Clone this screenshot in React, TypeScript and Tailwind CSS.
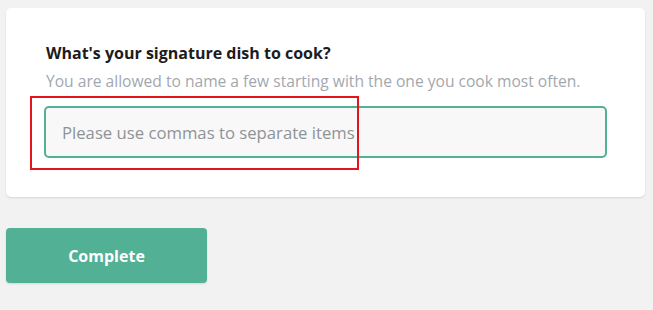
export default function App() {
  return (
    <div className="min-h-[310px] w-full bg-[#f2f2f2] pl-[6px] pr-[8px] pt-[8px] font-['Open_Sans',sans-serif]">
      <div className="rounded-[5px] bg-white px-[38px] pt-[34px] pb-[39px] shadow-[0_1px_2px_rgba(0,0,0,0.12)]">
        <h2 className="pl-[2px] text-[16px] leading-[22px] font-bold text-[#1c1c1c]">
          What's your signature dish to cook?
        </h2>
        <p className="mt-[6px] pl-[2px] text-[15.6px] leading-[22px] text-[#a2a8ae]">
          You are allowed to name a few starting with the one you cook most often.
        </p>
        <div className="relative mt-[14px]">
          <input
            type="text"
            placeholder="Please use commas to separate items"
            className="block h-[52px] w-full rounded-[5px] border-2 border-[#52b094] bg-[#f8f8f8] px-[16px] text-[16.7px] text-[#333] outline-none placeholder:text-[#8f9397]"
          />
          <div className="pointer-events-none absolute left-[-14px] top-[-10px] h-[74px] w-[329px] border-2 border-[#e3141c]" />
        </div>
      </div>
      <button className="mt-[31px] h-[55px] w-[201px] rounded-[4px] bg-[#52b094] text-[16px] font-bold text-white shadow-[0_1px_2px_rgba(0,0,0,0.12)]">
        Complete
      </button>
    </div>
  );
}
